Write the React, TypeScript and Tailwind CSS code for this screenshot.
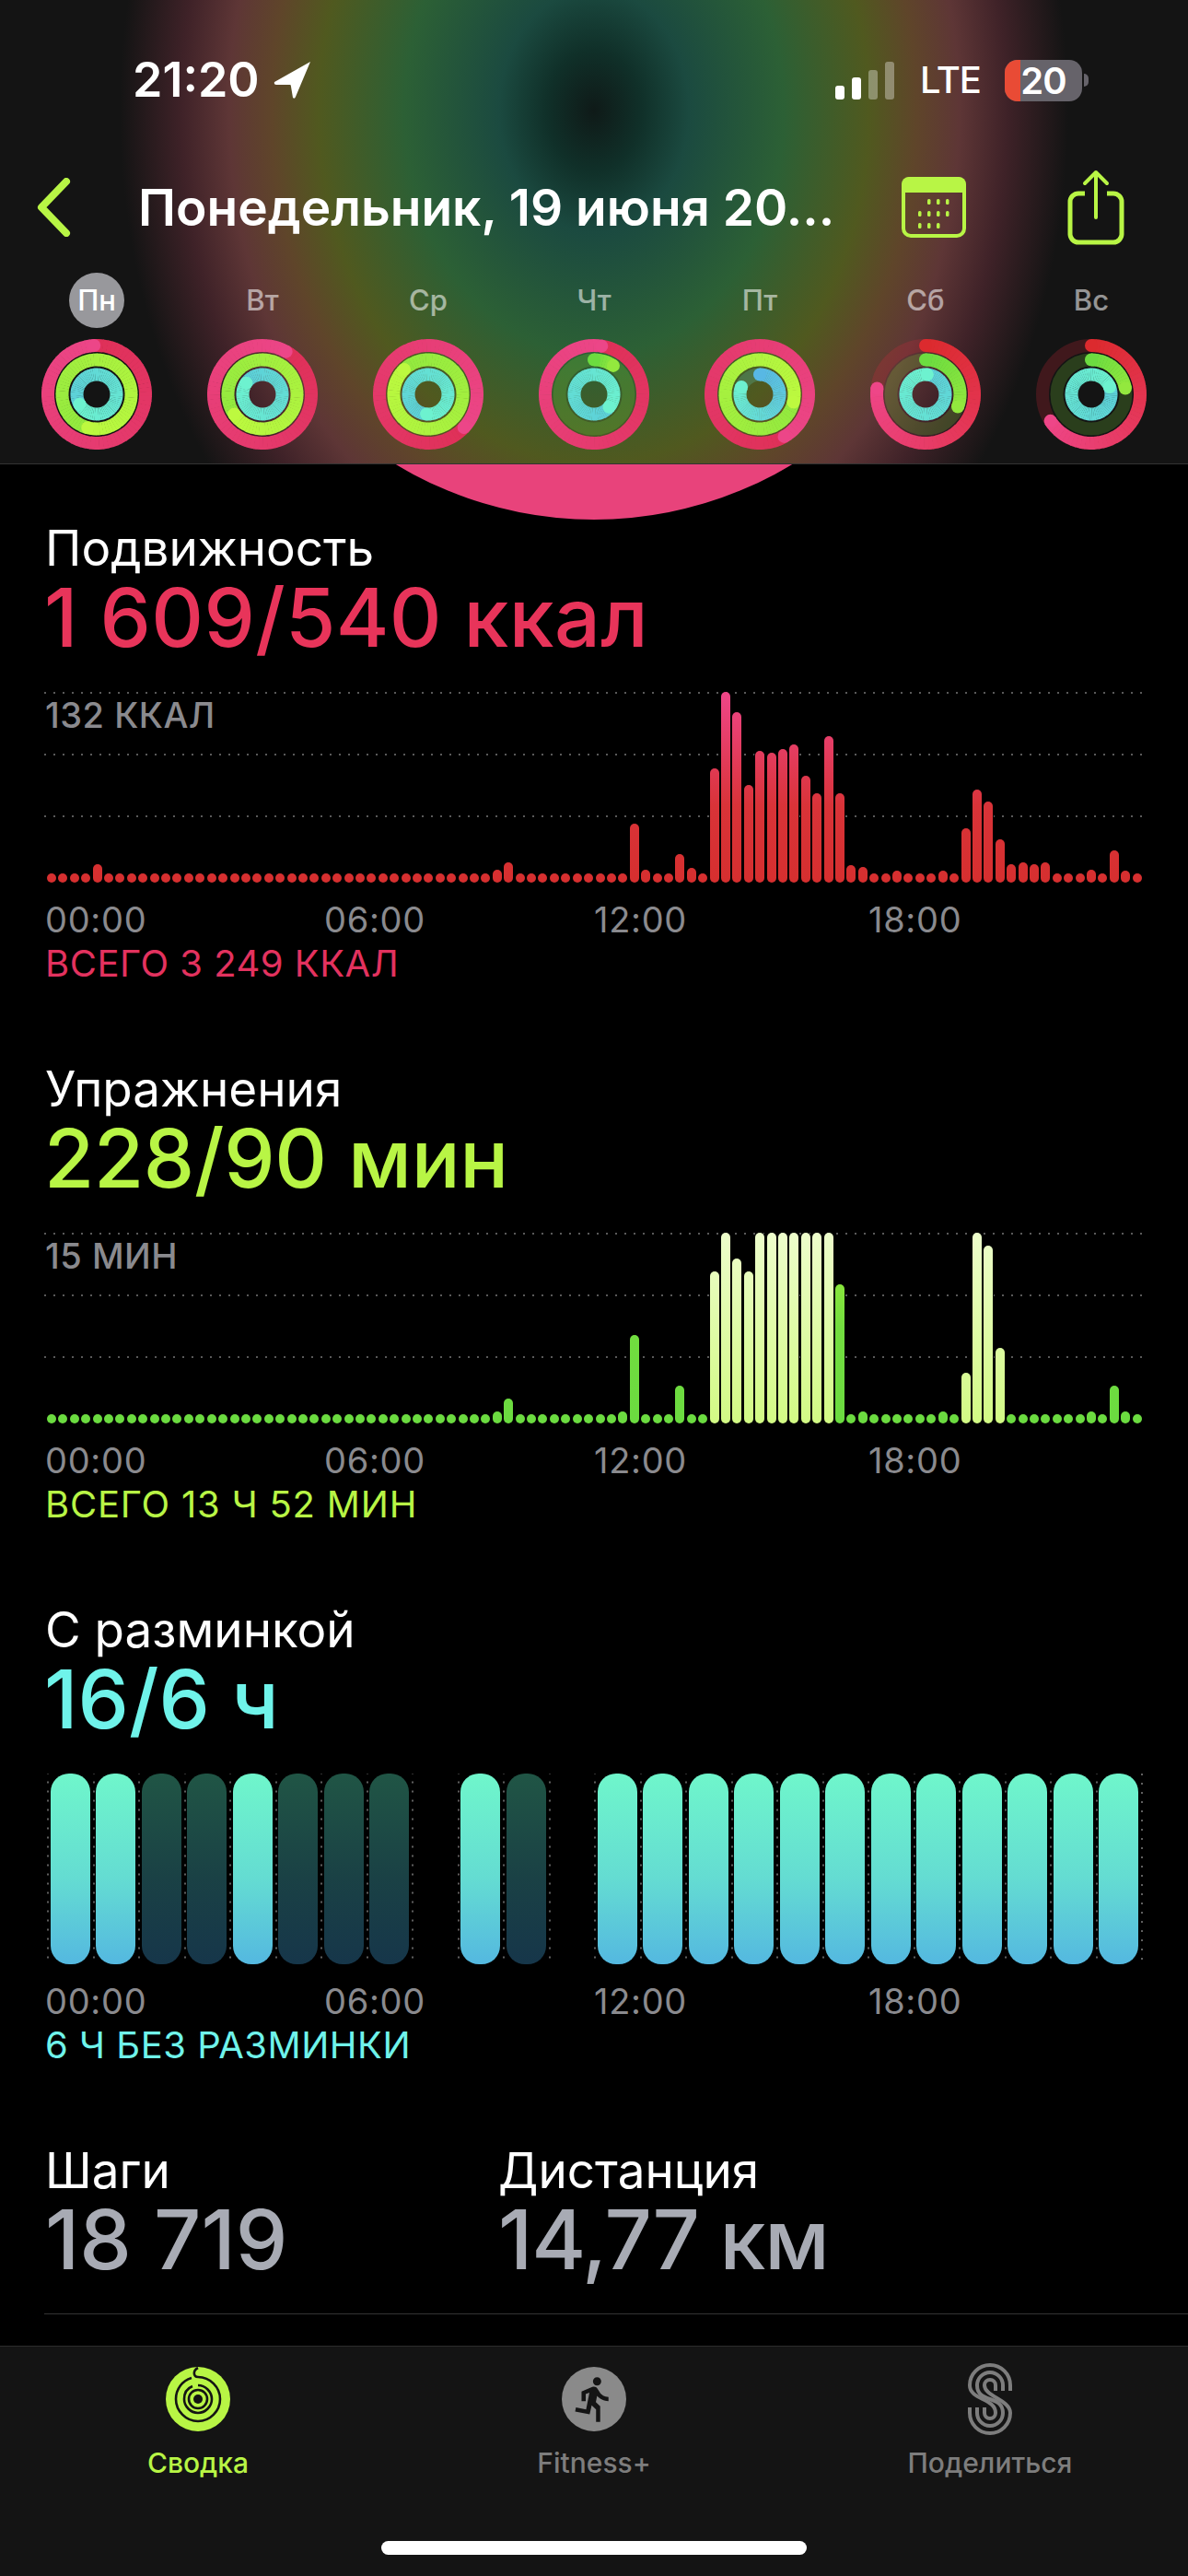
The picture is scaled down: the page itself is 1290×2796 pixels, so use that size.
import React from 'react';
import { MdDirectionsRun } from 'react-icons/md';

const FONT = 'font-["Inter","Noto_Sans",sans-serif]';

type RingSpec = { a: string; b: string; tip: number; full?: boolean };
type DayRings = { label: string; active?: boolean; move: RingSpec; ex: RingSpec; stand: RingSpec };

const moveFull = { a: '#df3058', b: '#ec4688', full: true };
const exFull = { a: '#92e93f', b: '#bdf93f', full: true };
const standFull = { a: '#5ccfd9', b: '#6df2cf', full: true };
const movePart = { a: '#dc2a2e', b: '#ee4688' };
const exPart = { a: '#6cdc40', b: '#93e83e' };

const days: DayRings[] = [
  { label: 'Пн', active: true, move: { ...moveFull, tip: 357 }, ex: { ...exFull, tip: 195 }, stand: { ...standFull, tip: 240 } },
  { label: 'Вт', move: { ...moveFull, tip: 29 }, ex: { ...exFull, tip: 235 }, stand: { ...standFull, tip: 305 } },
  { label: 'Ср', move: { ...moveFull, tip: 133 }, ex: { ...exFull, tip: 316 }, stand: { ...standFull, tip: 185 } },
  { label: 'Чт', move: { ...moveFull, tip: 9 }, ex: { ...exPart, tip: 34 }, stand: { ...standFull, tip: 130 } },
  { label: 'Пт', move: { ...moveFull, tip: 150 }, ex: { ...exFull, tip: 103 }, stand: { a: '#58b8e4', b: '#6df0d0', tip: 292 } },
  { label: 'Сб', move: { ...movePart, tip: 277 }, ex: { ...exPart, tip: 111 }, stand: { ...standFull, tip: 5 } },
  { label: 'Вс', move: { ...movePart, tip: 237 }, ex: { ...exPart, tip: 80 }, stand: { ...standFull, tip: 68 } },
];

const pt = (r: number, deg: number) => {
  const t = ((deg - 90) * Math.PI) / 180;
  return [60 + r * Math.cos(t), 60 + r * Math.sin(t)];
};

const mix = (a: string, b: string, k: number) => {
  const ch = (s: string, i: number) => parseInt(s.slice(i, i + 2), 16);
  const out = [1, 3, 5].map(i => Math.round(ch(a, i) + (ch(b, i) - ch(a, i)) * k));
  return `rgb(${out.join(',')})`;
};

const RingArc = ({ r, spec, track }: { r: number; spec: RingSpec; track: string }) => {
  const from = spec.full ? spec.tip : 0;
  const to = spec.full ? spec.tip + 360 : spec.tip;
  const steps = Math.max(4, Math.round((to - from) / 5));
  const segs = [];
  for (let i = 0; i < steps; i++) {
    const a0 = from + ((to - from) * i) / steps;
    const a1 = from + ((to - from) * (i + 1)) / steps + 0.6;
    const [x0, y0] = pt(r, a0);
    const [x1, y1] = pt(r, a1);
    segs.push(
      <path key={i} d={`M${x0} ${y0}A${r} ${r} 0 0 1 ${x1} ${y1}`} fill="none" strokeWidth={14} stroke={mix(spec.a, spec.b, i / steps)} />
    );
  }
  const [sx, sy] = pt(r, from);
  const [ex, ey] = pt(r, to);
  return (
    <g>
      {!spec.full && <circle cx={60} cy={60} r={r} fill="none" strokeWidth={14} stroke={track} />}
      {segs}
      {!spec.full && <circle cx={sx} cy={sy} r={7} fill={spec.a} />}
      <circle cx={ex} cy={ey} r={7} fill={spec.b} />
    </g>
  );
};

const ActivityRings = ({ day }: { day: DayRings }) => (
  <svg width={120} height={120} viewBox="0 0 120 120">
    <RingArc r={53} spec={day.move} track="rgba(225,40,60,0.22)" />
    <RingArc r={37.5} spec={day.ex} track="rgba(130,230,60,0.2)" />
    <RingArc r={21.5} spec={day.stand} track="rgba(100,230,220,0.2)" />
  </svg>
);

const DottedRows = () => (
  <div className="absolute inset-0 flex flex-col">
    {[0, 1, 2].map(i => (
      <div key={i} className="h-[67px] bg-[linear-gradient(to_right,#5a5a5a_2px,transparent_2px)] bg-[length:10px_2px] bg-repeat-x" />
    ))}
  </div>
);

const moveBars: Record<number, number> = {
  4: 20, 39: 14, 40: 22, 51: 64, 52: 14, 55: 31, 56: 16, 58: 124, 59: 207, 60: 185, 61: 106, 62: 143, 63: 141, 64: 145,
  65: 150, 66: 116, 67: 97, 68: 159, 69: 97, 70: 19, 71: 17, 74: 13, 78: 13, 80: 59, 81: 101, 82: 88, 83: 47, 84: 20,
  85: 22, 86: 20, 87: 22, 91: 14, 93: 35, 94: 13,
};

const exBars: Record<number, number> = {
  39: 13, 40: 27, 50: 13, 51: 96, 55: 41, 58: 165, 59: 207, 60: 179, 61: 165, 62: 207, 63: 207, 64: 207, 65: 207, 66: 207,
  67: 207, 68: 207, 69: 151, 71: 13, 78: 13, 80: 55, 81: 207, 82: 193, 83: 82, 91: 13, 93: 41, 94: 13,
};

const brisk = [58, 59, 60, 61, 62, 63, 64, 65, 66, 67, 68, 80, 81, 82, 83];

const slots = Array.from({ length: 96 }, (_, i) => i);

const MoveChart = () => (
  <div className="relative h-[207px]">
    <DottedRows />
    <div className="absolute top-[5px] left-[1px] text-[38px] leading-[40px] font-medium tracking-[0.5px] text-[#8a8a8e]">132 ККАЛ</div>
    <div className="relative flex h-full items-end justify-between pr-[2px] pl-[3px]">
      {slots.map(i => (
        <div
          key={i}
          className="w-[10px] rounded-full bg-[linear-gradient(to_top,#d62f2f,#d93338_40%,#ef4689)] bg-[length:100%_207px] bg-bottom ring-1 ring-black"
          style={{ height: moveBars[i] ?? 10 }}
        />
      ))}
    </div>
  </div>
);

const ExerciseChart = () => (
  <div className="relative h-[207px]">
    <DottedRows />
    <div className="absolute top-[5px] left-[1px] text-[38px] leading-[40px] font-medium tracking-[0.5px] text-[#8a8a8e]">15 МИН</div>
    <div className="relative flex h-full items-end justify-between pr-[2px] pl-[3px]">
      {slots.map(i =>
        brisk.includes(i) ? (
          <div
            key={i}
            className="w-[10px] rounded-full bg-[linear-gradient(to_top,#d2fa84,#edfdcb)] bg-[length:100%_207px] bg-bottom ring-1 ring-black"
            style={{ height: exBars[i] }}
          />
        ) : (
          <div
            key={i}
            className="w-[10px] rounded-full bg-[linear-gradient(to_top,#6bdb40,#72dd3f_50%,#a2f038)] bg-[length:100%_207px] bg-bottom ring-1 ring-black"
            style={{ height: exBars[i] ?? 10 }}
          />
        )
      )}
    </div>
  </div>
);

const standHours = [1, 1, 0, 0, 1, 0, 0, 0, -1, 1, 0, -1, 1, 1, 1, 1, 1, 1, 1, 1, 1, 1, 1, 1];

const StandChart = () => (
  <div className="flex h-[207px] pl-[3px]">
    {standHours.map((s, i) => (
      <div key={i} className="h-full w-[49.5px] bg-[linear-gradient(to_bottom,#5f5f5f_2px,transparent_2px)] bg-[length:2px_10px] bg-left bg-repeat-y pl-[3.5px]">
        {s === 1 && <div className="h-full w-[43px] rounded-[20px] bg-[linear-gradient(to_bottom,#6ff6cb,#64dcd2_55%,#54b8e0)]" />}
        {s === 0 && <div className="h-full w-[43px] rounded-[20px] bg-[linear-gradient(to_bottom,#205545,#1a4145_55%,#16364a)]" />}
      </div>
    ))}
    <div className="h-full w-[2px] bg-[linear-gradient(to_bottom,#5f5f5f_2px,transparent_2px)] bg-[length:2px_10px] bg-repeat-y" />
  </div>
);

const TimeAxis = () => (
  <div className="mt-[20px] grid grid-cols-[303px_293px_298px_298px] pl-[1px] text-[38px] leading-[40px] tracking-[0.7px] text-[#8a8a8e]">
    <span>00:00</span>
    <span>06:00</span>
    <span>12:00</span>
    <span>18:00</span>
  </div>
);

const SummaryIcon = () => (
  <svg width={70} height={70} viewBox="0 0 70 70">
    <circle cx={35} cy={35} r={35} fill="#b8f545" />
    <g fill="none" stroke="#141414" strokeWidth={2.6}>
      <path d="M35 1C29 4 30 11 35 11C48 11 59 22 59 35C59 48 48 59 35 59C22 59 11 48 11 35C11 24 18 15 28 12" />
      <path d="M35 20C43 20 50 27 50 35C50 43 43 50 35 50C27 50 20 43 20 35C20 28 24 23 29 21" />
    </g>
    <circle cx={35} cy={35} r={10} fill="none" stroke="#141414" strokeWidth={2.6} />
    <circle cx={35} cy={35} r={5} fill="#141414" />
  </svg>
);

const ShareRingsIcon = () => (
  <svg width={52} height={78} viewBox="0 0 52 78">
    <g fill="none" stroke="#7d7d7d" strokeWidth={4}>
      <path d="M48 30V24A22 22 0 0 0 4 24C4 40 32 38 32 54A6 6 0 0 1 20 54V48" />
      <path d="M40 30V24A14 14 0 0 0 12 24C12 44 40 34 40 54A14 14 0 0 1 12 54V48" />
      <path d="M32 30V24A6 6 0 0 0 20 24C20 36 48 40 48 54A22 22 0 0 1 4 54V48" />
    </g>
  </svg>
);

const App = () => {
  return (
    <div className={`relative flex h-[2796px] w-[1290px] flex-col overflow-hidden bg-black text-white ${FONT}`}>
      <div className="absolute top-[-268px] left-[229px] h-[832px] w-[832px] rounded-full bg-[#e8437b]" />

      <header className="relative h-[504px] shrink-0 border-b border-[#333] bg-[#141414] bg-[radial-gradient(515px_660px_at_645px_120px,#0f1a18_0px,#103029_10%,#1b4a40_20%,#2c6035_40%,#50591f_58%,#5f452a_68%,#5e3636_77%,#3f2228_87%,#141414_100%)] pt-[57px]">
        <div className="flex h-[60px] items-center justify-between pr-[108px] pl-[144px]">
          <div className="flex items-center">
            <span className="text-[52px] leading-[60px] font-semibold">21:20</span>
            <svg className="ml-[15px]" width={41} height={40} viewBox="0 0 41 40">
              <path d="M40 0L1 22Q0 25 3 25L18 25Q19 25 19 27L21 39Q23 41 24 38Z" fill="#fff" />
            </svg>
          </div>
          <div className="flex items-center">
            <div className="flex h-[41px] items-end gap-[8px]">
              <div className="h-[15px] w-[10px] rounded-[3px] bg-white" />
              <div className="h-[24px] w-[10px] rounded-[3px] bg-white" />
              <div className="h-[32px] w-[10px] rounded-[3px] bg-white/35" />
              <div className="h-[41px] w-[10px] rounded-[3px] bg-white/35" />
            </div>
            <span className="ml-[28px] text-[40px] leading-[44px] font-medium tracking-[-1px]">LTE</span>
            <div className="relative ml-[26px] h-[45px] w-[84px] rounded-[14px] bg-[#66636a]">
              <div className="h-full w-[17px] rounded-l-[14px] bg-[#e94b35]" />
              <span className="absolute inset-0 text-center text-[40px] leading-[45px] font-semibold tracking-[-1px]">20</span>
            </div>
            <div className="ml-[2px] h-[14px] w-[5px] rounded-r-full bg-[#66636a]" />
          </div>
        </div>

        <div className="mt-[63px] flex h-[90px] items-center pl-[40px]">
          <svg width={37} height={64} viewBox="0 0 37 64">
            <path d="M32 4L5 32L32 60" fill="none" stroke="#b8f545" strokeWidth={8} strokeLinecap="round" strokeLinejoin="round" />
          </svg>
          <div className="ml-[73px] w-[829px] text-[55px] leading-[64px] font-semibold whitespace-nowrap">Понедельник, 19 июня 20...</div>
          <svg width={70} height={66} viewBox="0 0 70 66">
            <rect x={2} y={2} width={66} height={62} rx={8} fill="none" stroke="#b8f545" strokeWidth={4} />
            <path d="M8 0H62A8 8 0 0 1 70 8V17H0V8A8 8 0 0 1 8 0Z" fill="#b8f545" />
            {[
              [28, 24], [38, 24], [48, 24],
              [18, 37], [28, 37], [38, 37], [48, 37],
              [18, 50], [28, 50], [38, 50],
            ].map(([x, y]) => (
              <rect key={`${x}-${y}`} x={x} y={y} width={3.5} height={6} rx={1.5} fill="#b8f545" />
            ))}
          </svg>
          <svg className="ml-[110px]" width={62} height={82} viewBox="0 0 62 82">
            <path d="M19 26H12A9 9 0 0 0 3 35V70A9 9 0 0 0 12 79H50A9 9 0 0 0 59 70V35A9 9 0 0 0 50 26H43" fill="none" stroke="#b8f545" strokeWidth={5} />
            <path d="M31 52V3M19 15L31 3L43 15" fill="none" stroke="#b8f545" strokeWidth={4} strokeLinecap="round" strokeLinejoin="round" />
          </svg>
        </div>

        <div className="mt-[26px] grid grid-cols-7 px-[15px]">
          {days.map(day => (
            <div key={day.label} className="flex flex-col items-center">
              {day.active ? (
                <div className="h-[60px] w-[60px] rounded-full bg-[#98989c] text-center text-[31px] leading-[60px] font-medium">{day.label}</div>
              ) : (
                <div className="h-[60px] text-[31px] leading-[60px] font-medium text-white/55">{day.label}</div>
              )}
              <div className="mt-[12px] h-[120px]">
                <ActivityRings day={day} />
              </div>
            </div>
          ))}
        </div>
      </header>

      <main className="relative flex-1 px-[48px]">
        <section className="h-[587px] pt-[63px]">
          <h2 className="pl-[1px] text-[53px] leading-[56px]">Подвижность</h2>
          <div className="mt-[2px] h-[90px] text-[88px] leading-[90px] font-medium tracking-[0.3px] text-[#e8345a]">1 609/540 ккал</div>
          <div className="mt-[36px]">
            <MoveChart />
          </div>
          <TimeAxis />
          <div className="mt-[8px] pl-[1px] text-[40px] leading-[40px] tracking-[0.5px] text-[#e3325f]">ВСЕГО 3 249 ККАЛ</div>
        </section>

        <section className="h-[587px] pt-[63px]">
          <h2 className="pl-[1px] text-[53px] leading-[56px]">Упражнения</h2>
          <div className="mt-[2px] h-[90px] text-[88px] leading-[90px] font-medium tracking-[-0.3px] text-[#b8f545]">228/90 мин</div>
          <div className="mt-[36px]">
            <ExerciseChart />
          </div>
          <TimeAxis />
          <div className="mt-[8px] pl-[1px] text-[40px] leading-[40px] tracking-[0.8px] text-[#b8f545]">ВСЕГО 13 Ч 52 МИН</div>
        </section>

        <section className="h-[587px] pt-[63px]">
          <h2 className="pl-[1px] text-[53px] leading-[56px]">С разминкой</h2>
          <div className="mt-[2px] h-[90px] text-[88px] leading-[90px] font-medium text-[#6ff3ea]">16/6 ч</div>
          <div className="mt-[36px]">
            <StandChart />
          </div>
          <TimeAxis />
          <div className="mt-[8px] pl-[1px] text-[40px] leading-[40px] tracking-[0.5px] text-[#6ff3ea]">6 Ч БЕЗ РАЗМИНКИ</div>
        </section>

        <section className="flex pt-[63px]">
          <div className="w-[493px] pl-[1px]">
            <h2 className="text-[53px] leading-[56px]">Шаги</h2>
            <div className="mt-[2px] h-[90px] text-[90px] leading-[90px] font-medium text-[#a8abb4]">18 719</div>
          </div>
          <div>
            <h2 className="text-[53px] leading-[56px]">Дистанция</h2>
            <div className="mt-[2px] h-[90px] text-[90px] leading-[90px] font-medium tracking-[-1.2px] text-[#a8abb4]">14,77 км</div>
          </div>
        </section>
        <div className="mt-[35px] -mr-[48px] h-px bg-[#333]" />
      </main>

      <nav className="relative flex h-[250px] shrink-0 flex-col items-center border-t border-[#2c2c2c] bg-[#141414]">
        <div className="grid w-full grid-cols-3 pt-[18px]">
          <div className="flex flex-col items-center">
            <div className="flex h-[78px] items-center">
              <SummaryIcon />
            </div>
            <span className="mt-[10px] text-[30px] leading-[40px] font-medium text-[#b8f545]">Сводка</span>
          </div>
          <div className="flex flex-col items-center">
            <div className="flex h-[78px] items-center">
              <div className="flex h-[70px] w-[70px] items-center justify-center rounded-full bg-[#8a8a8a]">
                <MdDirectionsRun size={54} color="#141414" />
              </div>
            </div>
            <span className="mt-[10px] text-[30px] leading-[40px] font-medium text-[#7d7d7d]">Fitness+</span>
          </div>
          <div className="flex flex-col items-center">
            <div className="flex h-[78px] items-center">
              <ShareRingsIcon />
            </div>
            <span className="mt-[10px] text-[30px] leading-[40px] font-medium text-[#7d7d7d]">Поделиться</span>
          </div>
        </div>
        <div className="mt-[65px] h-[15px] w-[462px] rounded-full bg-white" />
      </nav>
    </div>
  );
};

export default App;
